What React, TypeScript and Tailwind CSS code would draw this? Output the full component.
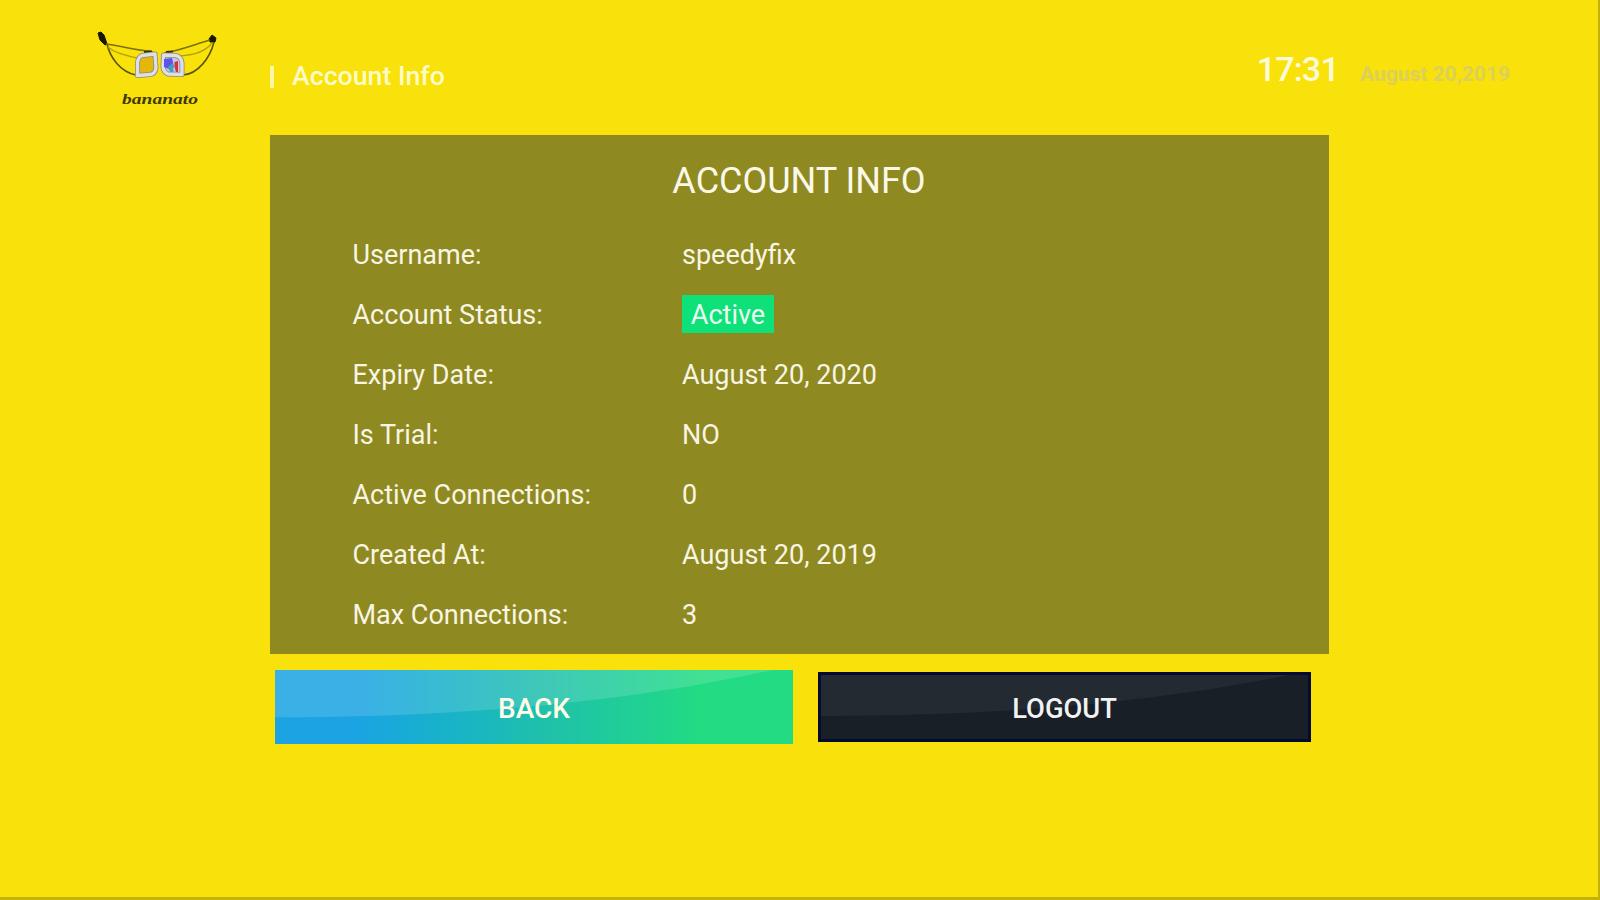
import React from 'react';

interface InfoRow {
  label: string;
  value: string;
  badge?: boolean;
}

const rows: InfoRow[] = [
  { label: 'Username:', value: 'speedyfix' },
  { label: 'Account Status:', value: 'Active', badge: true },
  { label: 'Expiry Date:', value: 'August 20, 2020' },
  { label: 'Is Trial:', value: 'NO' },
  { label: 'Active Connections:', value: '0' },
  { label: 'Created At:', value: 'August 20, 2019' },
  { label: 'Max Connections:', value: '3' },
];

function Logo() {
  return (
    <svg width="160" height="100" viewBox="0 0 160 100" fill="none">
      {/* left banana */}
      <path d="M18 13 L21 12 L24 15 L27 24 L25 25 L20 20 Z" fill="#1a1700" stroke="#1a1700" />
      <path d="M27 24 C30 37 40 52 56 55" stroke="#5d5400" strokeWidth="1.6" />
      <path d="M26 24 C42 26 58 31 70 31 L76 34" stroke="#7d7100" strokeWidth="1.5" />
      <path d="M28 27 C36 34 46 35 57 38" stroke="#b3a300" strokeWidth="1.3" />
      {/* right banana */}
      <path d="M129 19 L132 15 L136 18 L135 22 L130 22 Z" fill="#1a1700" stroke="#1a1700" />
      <path d="M134 22 C130 38 118 54 103 55" stroke="#5d5400" strokeWidth="1.6" />
      <path d="M130 20 C116 24 102 30 84 33" stroke="#7d7100" strokeWidth="1.5" />
      <path d="M132 23 C124 33 112 35 100 36" stroke="#b3a300" strokeWidth="1.3" />
      <path d="M64 32 L72 31.5 M86 32 L93 31.5" stroke="#3a3300" strokeWidth="2" />
      {/* tiles */}
      <path d="M62 35.500 L75 34 L76 48 Q75 54 70 54.500 L57.500 55.500 L57.500 43 Q58 37 62 35.500 Z" fill="#e3b80a" stroke="#8f877a" strokeWidth="5" strokeLinejoin="round" />
      <path d="M62 35.500 L75 34 L76 48 Q75 54 70 54.500 L57.500 55.500 L57.500 43 Q58 37 62 35.500 Z" stroke="#dedee6" strokeWidth="3.400" strokeLinejoin="round" />
      <path d="M83.500 35 L96 35.500 Q101.500 37 102 43 L102 54.500 L88 54 Q83.500 52 83 47 Z" fill="#c9c8ea" stroke="#8f877a" strokeWidth="5" strokeLinejoin="round" />
      <path d="M83.500 35 L96 35.500 Q101.500 37 102 43 L102 54.500 L88 54 Q83.500 52 83 47 Z" stroke="#dedee6" strokeWidth="3.400" strokeLinejoin="round" />
      <path d="M84 39 L92 38 L94 47 L91 50 L84 47 Z" fill="#5a55e6" />
      <path d="M88 47 L93 43 L93.500 52 L90 52 Z" fill="#3aa3bd" />
      <path d="M94.500 42 L98 41 L98 52 L96 52 L94.500 47 Z" fill="#d8303c" />
      <text x="42" y="83.500" fontFamily="Liberation Serif, serif" fontStyle="italic" fontWeight="700" fontSize="14" textLength="76" lengthAdjust="spacingAndGlyphs" fill="#3f3800">
        bananato
      </text>
    </svg>
  );
}

export default function App() {
  return (
    <div className="flex h-[900px] w-[1600px] flex-col overflow-hidden border-r-2 border-b-3 border-[#c4b109] bg-[#f9e10b] font-[Roboto,sans-serif] text-[#fffbe6]">
      <header className="flex h-[135px] shrink-0 pl-20">
        <div className="w-[190px] pt-5">
          <Logo />
        </div>
        <div className="flex h-[153px] flex-1 items-center gap-[18px]">
          <span className="h-[22px] w-1 bg-[#fff6a6]" />
          <h1 className="text-[26.7px] font-medium text-[#fffbc4]">Account Info</h1>
        </div>
        <div className="flex items-baseline gap-[21px] pt-[49px] pr-[88px]">
          <span className="text-[34px] leading-10 font-medium tracking-[-0.8px] text-[#fffbd8]">17:31</span>
          <span className="text-[21px] font-bold text-[#dcd05a]">August 20,2019</span>
        </div>
      </header>

      <main className="ml-[269.500px] w-[1059px]">
        <section className="h-[519px] bg-[#8f8922] pt-[25px]">
          <h2 className="text-center text-[36px] leading-[42px] text-[#fbf8e8]">ACCOUNT INFO</h2>
          <dl className="pt-[23px] pl-[83px] text-[27px] text-[#f8f5e2]">
            {rows.map((row) => (
              <div key={row.label} className="flex h-[60px] items-center">
                <dt className="w-[329.500px]">{row.label}</dt>
                <dd>
                  {row.badge ? (
                    <span className="mb-0.5 flex h-[38px] w-[92px] items-center justify-center bg-[#0ee07a] pt-[3px] text-[#eafff0]">
                      {row.value}
                    </span>
                  ) : (
                    row.value
                  )}
                </dd>
              </div>
            ))}
          </dl>
        </section>

        <div className="flex items-center gap-[25px] pt-4 pl-[5.500px] font-medium">
          <button className="relative h-[74px] w-[518px] bg-linear-to-r from-[#1ba3e4] from-15% via-[#20c0ab] via-52% to-[#22db82] to-82% pt-1 text-[28px]">
            <svg className="absolute inset-0 h-full w-full" viewBox="0 0 100 100" preserveAspectRatio="none">
              <path d="M0 0 H96 C72 38 40 64 0 64 Z" fill="#fff" fillOpacity="0.14" />
            </svg>
            <span className="relative">BACK</span>
          </button>
          <button className="relative h-[70px] w-[493px] border-3 border-[#050a30] bg-[#181f27] pt-1 text-[27.300px] text-[#f1f2f2]">
            <svg className="absolute inset-0 h-full w-full" viewBox="0 0 100 100" preserveAspectRatio="none">
              <path d="M0 0 H96 C72 38 40 64 0 64 Z" fill="#fff" fillOpacity="0.05" />
            </svg>
            <span className="relative">LOGOUT</span>
          </button>
        </div>
      </main>
    </div>
  );
}
